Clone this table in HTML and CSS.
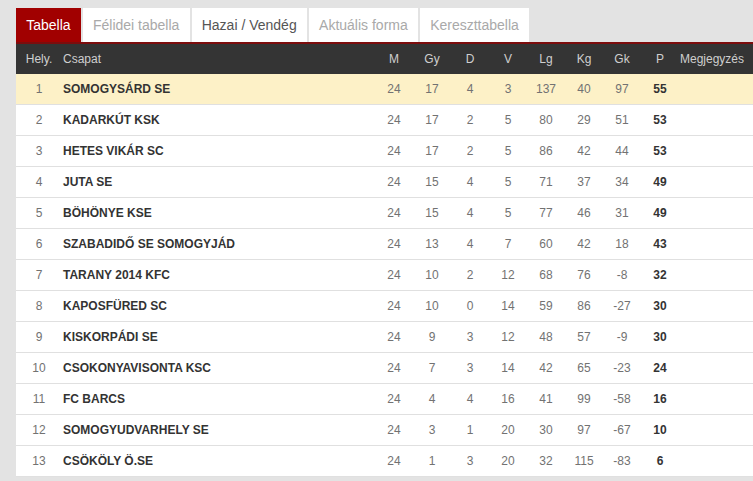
FILE: index.html
```html
<!DOCTYPE html>
<html lang="hu">
<head>
<meta charset="utf-8">
<title>Tabella</title>
<link rel="stylesheet" href="styles.css">
</head>
<body>
<div class="page">
  <nav class="tabs">
    <span class="tab active">Tabella</span>
    <span class="tab muted">Félidei tabella</span>
    <span class="tab">Hazai / Vendég</span>
    <span class="tab muted">Aktuális forma</span>
    <span class="tab muted">Kereszttabella</span>
  </nav>
  <table class="standings">
    <colgroup>
      <col class="c-pos"><col class="c-team"><col class="c-num"><col class="c-num"><col class="c-num"><col class="c-num"><col class="c-num"><col class="c-num"><col class="c-num"><col class="c-num"><col class="c-note">
    </colgroup>
    <thead>
      <tr><th>Hely.</th><th class="left">Csapat</th><th>M</th><th>Gy</th><th>D</th><th>V</th><th>Lg</th><th>Kg</th><th>Gk</th><th>P</th><th class="left">Megjegyzés</th></tr>
    </thead>
    <tbody>
      <tr class="first"><td>1</td><td class="team">SOMOGYSÁRD SE</td><td>24</td><td>17</td><td>4</td><td>3</td><td>137</td><td>40</td><td>97</td><td class="pts">55</td><td></td></tr>
      <tr><td>2</td><td class="team">KADARKÚT KSK</td><td>24</td><td>17</td><td>2</td><td>5</td><td>80</td><td>29</td><td>51</td><td class="pts">53</td><td></td></tr>
      <tr><td>3</td><td class="team">HETES VIKÁR SC</td><td>24</td><td>17</td><td>2</td><td>5</td><td>86</td><td>42</td><td>44</td><td class="pts">53</td><td></td></tr>
      <tr><td>4</td><td class="team">JUTA SE</td><td>24</td><td>15</td><td>4</td><td>5</td><td>71</td><td>37</td><td>34</td><td class="pts">49</td><td></td></tr>
      <tr><td>5</td><td class="team">BÖHÖNYE KSE</td><td>24</td><td>15</td><td>4</td><td>5</td><td>77</td><td>46</td><td>31</td><td class="pts">49</td><td></td></tr>
      <tr><td>6</td><td class="team">SZABADIDŐ SE SOMOGYJÁD</td><td>24</td><td>13</td><td>4</td><td>7</td><td>60</td><td>42</td><td>18</td><td class="pts">43</td><td></td></tr>
      <tr><td>7</td><td class="team">TARANY 2014 KFC</td><td>24</td><td>10</td><td>2</td><td>12</td><td>68</td><td>76</td><td>-8</td><td class="pts">32</td><td></td></tr>
      <tr><td>8</td><td class="team">KAPOSFÜRED SC</td><td>24</td><td>10</td><td>0</td><td>14</td><td>59</td><td>86</td><td>-27</td><td class="pts">30</td><td></td></tr>
      <tr><td>9</td><td class="team">KISKORPÁDI SE</td><td>24</td><td>9</td><td>3</td><td>12</td><td>48</td><td>57</td><td>-9</td><td class="pts">30</td><td></td></tr>
      <tr><td>10</td><td class="team">CSOKONYAVISONTA KSC</td><td>24</td><td>7</td><td>3</td><td>14</td><td>42</td><td>65</td><td>-23</td><td class="pts">24</td><td></td></tr>
      <tr><td>11</td><td class="team">FC BARCS</td><td>24</td><td>4</td><td>4</td><td>16</td><td>41</td><td>99</td><td>-58</td><td class="pts">16</td><td></td></tr>
      <tr><td>12</td><td class="team">SOMOGYUDVARHELY SE</td><td>24</td><td>3</td><td>1</td><td>20</td><td>30</td><td>97</td><td>-67</td><td class="pts">10</td><td></td></tr>
      <tr><td>13</td><td class="team">CSÖKÖLY Ö.SE</td><td>24</td><td>1</td><td>3</td><td>20</td><td>32</td><td>115</td><td>-83</td><td class="pts">6</td><td></td></tr>
    </tbody>
  </table>
</div>
</body>
</html>
```

FILE: styles.css
```css
html, body {
  margin: 0;
  padding: 0;
  background: #e3e3e3;
  overflow: hidden;
}

body {
  font-family: "Liberation Sans", Arial, sans-serif;
  width: 753px;
  height: 481px;
}

.page {
  padding: 8px 0 0 16px;
}

.tabs {
  display: flex;
  gap: 2px;
  height: 34px;
}

.tab {
  display: block;
  height: 34px;
  line-height: 34px;
  padding: 0 10.2px;
  background: #ffffff;
  color: #555555;
  font-size: 14px;
  white-space: nowrap;
}

.tab.muted {
  color: #a9a9a9;
}

.tab.active {
  background: #a10000;
  color: #ffffff;
}

.standings {
  width: 737px;
  border-collapse: collapse;
  table-layout: fixed;
  border-top: 2px solid #7c0d0d;
  font-size: 12px;
}

.c-pos { width: 46px; }
.c-team { width: 313px; }
.c-num { width: 38px; }
.c-note { width: 74px; }

.standings th {
  background: #343434;
  color: #cfcfcf;
  font-weight: normal;
  height: 30px;
  padding: 0;
  text-align: center;
  white-space: nowrap;
}

.standings th.left {
  text-align: left;
  padding-left: 1px;
}

.standings td {
  background: #ffffff;
  height: 30px;
  padding: 0;
  text-align: center;
  color: #727272;
  border-bottom: 1px solid #e0e0e0;
  white-space: nowrap;
}

.standings tr.first td {
  background: #fdf1c7;
}

.standings td.team {
  text-align: left;
  padding-left: 1px;
  font-weight: bold;
  color: #333333;
}

.standings td.pts {
  font-weight: bold;
  color: #333333;
}
```
